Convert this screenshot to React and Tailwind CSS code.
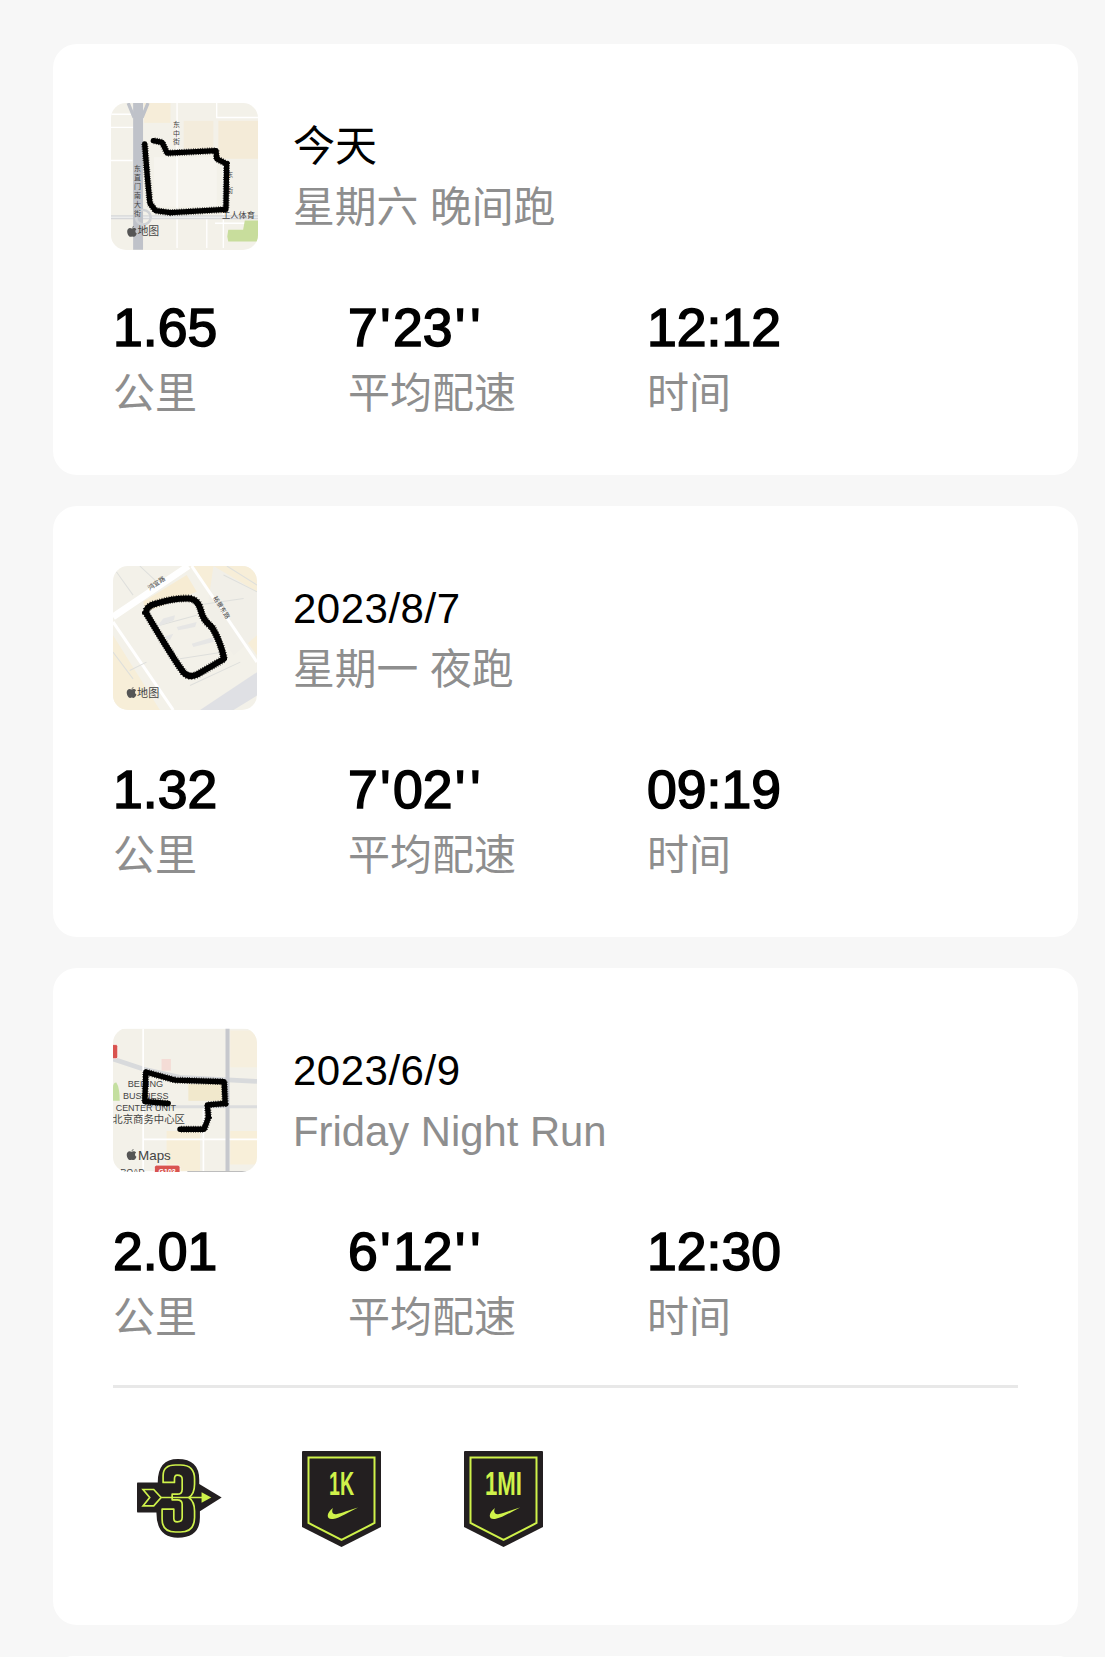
const LIME = "#cff24a";
const DARK = "#231f20";

function Route({ d, width = 16 }) {
  return (
    <g fill="none" stroke="#000" strokeLinejoin="round" strokeLinecap="round">
      <path d={d} strokeWidth={width} />
      <path d={d} strokeWidth={width + 5} strokeDasharray="2 5" strokeLinecap="butt" />
    </g>
  );
}

function AppleMark({ x, y }) {
  return (
    <g transform={`translate(${x} ${y})`} fill="#555">
      <path d="M15 8 C9 4 1 7 1 17 C1 26 7 33 11 33 C13 33 14 32 16 32 C18 32 19 33 21 33 C25 33 29 27 30 23 C25 21 24 13 29 10 C26 6 20 5 15 8Z" />
      <path d="M15 6 Q16 1 22 0 Q22 5 15 6Z" />
    </g>
  );
}

function MapOne() {
  return (
    <svg viewBox="30 36 445 445" className="w-full h-full block">
      <rect x="30" y="36" width="445" height="445" fill="#f3f1e9" />
      <rect x="130" y="36" width="80" height="60" fill="#f6edd9" />
      <rect x="250" y="90" width="90" height="85" fill="#f3ecdc" />
      <rect x="355" y="90" width="120" height="115" fill="#f4ebd8" />
      <rect x="160" y="200" width="190" height="150" fill="#f6f4ee" />
      <path d="M30 110 H100 M30 210 H95 M350 36 V80 H475 M230 36 V475 M370 210 V475 M320 385 V475 M345 400 H475 M30 70 H90" stroke="#fff" strokeWidth="4" fill="none" />
      <path d="M30 382 H475" stroke="#d6d7d9" strokeWidth="12" fill="none" />
      <path d="M30 382 H475" stroke="#eceded" strokeWidth="5" fill="none" />
      <path d="M382 440 L385 420 L430 420 L435 392 L475 392 V455 L385 455Z" fill="#c8dd9c" />
      <path d="M112 36 V480" stroke="#bfc2c9" strokeWidth="30" fill="none" />
      <path d="M82 36 L100 80 M142 36 L124 80" stroke="#bfc2c9" strokeWidth="10" fill="none" />
      <circle cx="128" cy="382" r="22" fill="none" stroke="#d0d2d5" strokeWidth="8" />
      <g fill="#444">
        <text x="218" y="110" fontSize="21">东</text>
        <text x="218" y="136" fontSize="21">中</text>
        <text x="218" y="160" fontSize="21">街</text>
        <text x="100" y="243" fontSize="21">东</text>
        <text x="100" y="270" fontSize="21">直</text>
        <text x="100" y="297" fontSize="21">门</text>
        <text x="100" y="325" fontSize="21">南</text>
        <text x="100" y="350" fontSize="21">大</text>
        <text x="100" y="378" fontSize="21">街</text>
        <text x="380" y="260" fontSize="20">东</text>
        <text x="380" y="310" fontSize="20">街</text>
        <text x="366" y="385" fontSize="25">工人体育</text>
        <text x="110" y="436" fontSize="33">地图</text>
      </g>
      <AppleMark x="78" y="408" />
      <Route d="M132 160 L140 260 L148 340 L165 362 L210 368 L378 358 L380 220 L350 205 L348 180 L200 188 L185 155 L158 150" />
    </svg>
  );
}

function MapTwo() {
  return (
    <svg viewBox="40 33 430 430" className="w-full h-full block">
      <rect x="40" y="33" width="430" height="430" fill="#f3f1e9" />
      <path d="M270 33 L470 300 V33Z" fill="#f7eed8" />
      <path d="M40 240 V463 H180 Z" fill="#f7eed8" />
      <path d="M130 140 L260 60 L290 110 L140 170Z" fill="#f7ecd3" />
      <path d="M340 33 L470 110 V240 L400 300 L320 170Z" fill="#f1efe8" />
      <path d="M40 185 L265 33" stroke="#fff" strokeWidth="20" fill="none" />
      <path d="M275 33 L470 320" stroke="#fff" strokeWidth="9" fill="none" />
      <path d="M40 200 L220 463" stroke="#fff" strokeWidth="9" fill="none" />
      <path d="M50 50 L100 120 M120 33 L170 80 M380 33 L470 90 M40 290 L100 370 M370 60 L470 110 M290 150 L430 130 M180 210 L290 180 M240 310 L370 290 M270 390 L420 320 M90 345 L140 320" stroke="#dedfdc" strokeWidth="3" fill="none" />
      <path d="M190 190 L225 180 L222 195 L170 215Z M230 215 L290 200 L285 215 L235 225Z M275 265 L340 245 L340 260 L280 275Z M190 245 L220 235 L210 255Z" fill="#e6e6e5" />
      <path d="M300 463 L470 350 V420 L400 463Z" fill="#dfe0e4" />
      <g fill="#444">
        <text fontSize="19" transform="translate(150 106) rotate(-34)">鸿宜路</text>
        <text fontSize="19" transform="translate(338 128) rotate(58)">裕景东路</text>
        <text x="112" y="423" fontSize="33">地图</text>
      </g>
      <AppleMark x="80" y="394" />
      <Route width={18} d="M138 172 Q140 152 170 145 Q220 128 270 130 Q295 135 302 165 Q308 195 335 215 Q360 255 372 310 Q330 335 300 352 Q270 372 250 350 Q220 310 138 172Z" />
    </svg>
  );
}

function MapThree() {
  return (
    <svg viewBox="40 25 430 425" className="w-full h-full block">
      <rect x="40" y="25" width="430" height="425" fill="#f3f1e9" />
      <rect x="390" y="30" width="80" height="110" fill="#f6efde" />
      <rect x="265" y="190" width="100" height="50" fill="#f1e8cc" />
      <rect x="200" y="330" width="100" height="120" fill="#f7eed8" />
      <rect x="390" y="330" width="80" height="100" fill="#f8efd9" />
      <rect x="185" y="115" width="28" height="35" fill="#f4dcd6" />
      <path d="M40 200 Q40 185 50 185 Q60 200 60 240 H40Z" fill="#c4dfa0" />
      <path d="M40 115 L130 145 L240 170 L470 182" stroke="#d8dadc" strokeWidth="14" fill="none" />
      <path d="M130 25 V450 M310 260 V450 M130 355 H470" stroke="#fff" strokeWidth="5" fill="none" />
      <path d="M130 258 H470" stroke="#dcddde" strokeWidth="9" fill="none" />
      <path d="M382 25 V450" stroke="#c6c8cd" strokeWidth="12" fill="none" />
      <rect x="30" y="72" width="24" height="42" rx="5" fill="#d9534f" stroke="#fff" strokeWidth="2" />
      <g fill="#444">
        <text x="84" y="200" fontSize="26" textLength="106" lengthAdjust="spacingAndGlyphs">BEIJING</text>
        <text x="70" y="235" fontSize="26" textLength="136" lengthAdjust="spacingAndGlyphs">BUSINESS</text>
        <text x="48" y="270" fontSize="26" textLength="180" lengthAdjust="spacingAndGlyphs">CENTER UNIT</text>
        <text x="38" y="306" fontSize="31">北京商务中心区</text>
        <text x="115" y="416" fontSize="40">Maps</text>
        <text x="62" y="462" fontSize="25">ROAD</text>
      </g>
      <AppleMark x="80" y="384" />
      <rect x="164" y="432" width="76" height="40" rx="6" fill="#d9534f" stroke="#fff" strokeWidth="2" />
      <text x="176" y="458" fontSize="21" fontWeight="700" fill="#fff">G103</text>
      <path d="M262 452 H470" stroke="#bdbdbd" strokeWidth="5" fill="none" />
      <Route d="M138 154 L135 242 L205 248 M138 154 L225 178 L372 183 L375 248 L322 252 L325 290 L312 325 L240 325" />
    </svg>
  );
}

function Shield({ label }) {
  const wide = label.length > 2;
  return (
    <svg viewBox="0 0 79 96" className="w-[79px] h-[96px] block">
      <path d="M1 0 H78 Q79 0 79 1 V76 L39.5 96 L0 76 V1 Q0 0 1 0Z" fill={DARK} />
      <path d="M6.5 6.5 H72.5 V72 L39.5 89 L6.5 72Z" fill="none" stroke={LIME} strokeWidth="2" />
      <text x="39.5" y="44" textAnchor="middle" fontSize="34" fontWeight="700" textLength={wide ? 37 : 25} lengthAdjust="spacingAndGlyphs" fill={LIME}>
        {label}
      </text>
      <path d="M31 57 C24 62 24 69 31 68 C38 67 47 61 56 56.5 C47 59 40 62 35 63 C31 64 29 61 31 57Z" fill={LIME} />
    </svg>
  );
}

function ThreeBadge() {
  return (
    <svg viewBox="50 90 254 236" className="w-[85px] h-[79px] block">
      <path d="M52 160 H112 Q112 90 172 90 Q236 90 236 152 V165 L303 205 L238 246 V265 Q238 325 172 325 Q108 325 108 250 H52 Q50 250 50 246 V164 Q50 160 52 160Z" fill={DARK} />
      <path d="M128 160 V140 Q128 108 165 108 H180 Q222 108 222 150 V165 Q222 195 205 205 Q222 218 222 245 V265 Q222 308 180 308 H165 Q125 308 125 270 V240 H160 V268 Q160 278 170 278 Q185 278 185 265 V225 Q185 212 170 212 H155 V195 H170 Q185 195 185 180 V150 Q185 138 170 138 Q162 138 162 150 V160Z" fill={DARK} stroke={LIME} strokeWidth="5" strokeLinejoin="round" />
      <path d="M68 181 H100 L122 205 L100 230 H68 L88 205Z" fill={DARK} stroke={LIME} strokeWidth="5" />
      <path d="M122 205 H245" stroke={LIME} strokeWidth="5" />
      <path d="M243 189 L272 205 L243 221Z" fill={LIME} />
    </svg>
  );
}

function Stat({ value, label, className }) {
  return (
    <div className={className}>
      <div className="text-[53.5px] leading-[61px] text-black [-webkit-text-stroke:1.6px_#000]">
        {value.split("").map((c, i) =>
          c === "'" ? (
            <span key={i} className="mx-[2.5px]">'</span>
          ) : (
            <span key={i}>{c}</span>
          )
        )}
      </div>
      <div className="text-[42px] leading-[61px] mt-[5px] text-[#8e8e8e]">{label}</div>
    </div>
  );
}

function Card({ map, title, subtitle, stats, mapClass, titleClass, children }) {
  return (
    <section className="bg-white rounded-[24px] ml-[53px] mr-[27px] mb-[31px] px-[60px] pt-[60px] pb-[51px]">
      <div className="flex items-center h-[144px]">
        <div className={"overflow-hidden rounded-[15px] shrink-0 " + mapClass}>{map}</div>
        <div className="pl-[36px] pt-[1px]">
          <div className={"text-[42px] leading-[61px] text-black " + titleClass}>{title}</div>
          <div className="text-[41.8px] leading-[61px] text-[#8e8e8e]">{subtitle}</div>
        </div>
      </div>
      <div className="flex mt-[49px]">
        <Stat className="w-[235px]" value={stats[0]} label="公里" />
        <Stat className="w-[299px]" value={stats[1]} label="平均配速" />
        <Stat value={stats[2]} label="时间" />
      </div>
      {children}
    </section>
  );
}

export default function App() {
  return (
    <div className="h-[1657px] overflow-hidden bg-[#f7f7f7] pt-[44px] font-['Liberation_Sans','Noto_Sans_CJK_SC',sans-serif]">
      <Card
        map={<MapOne />}
        mapClass="w-[147px] h-[147px] -ml-[2px] -mr-[1px]"
        titleClass=""
        title="今天"
        subtitle="星期六 晚间跑"
        stats={["1.65", "7'23''", "12:12"]}
      />
      <Card
        map={<MapTwo />}
        mapClass="w-[144px] h-[144px]"
        titleClass="tracking-[0.5px]"
        title="2023/8/7"
        subtitle="星期一 夜跑"
        stats={["1.32", "7'02''", "09:19"]}
      />
      <Card
        map={<MapThree />}
        mapClass="w-[144px] h-[144px]"
        titleClass="tracking-[0.5px]"
        title="2023/6/9"
        subtitle="Friday Night Run"
        stats={["2.01", "6'12''", "12:30"]}
      >
        <div className="h-[3px] bg-[#e8e8e8] mt-[37px]" />
        <div className="flex items-start mt-[63px] mb-[27px]">
          <div className="mt-[8px] ml-[24px] mr-[80px]"><ThreeBadge /></div>
          <div className="mr-[83px]"><Shield label="1K" /></div>
          <Shield label="1MI" />
        </div>
      </Card>
      <div className="bg-white rounded-t-[24px] ml-[53px] mr-[27px] h-[20px]" />
    </div>
  );
}
